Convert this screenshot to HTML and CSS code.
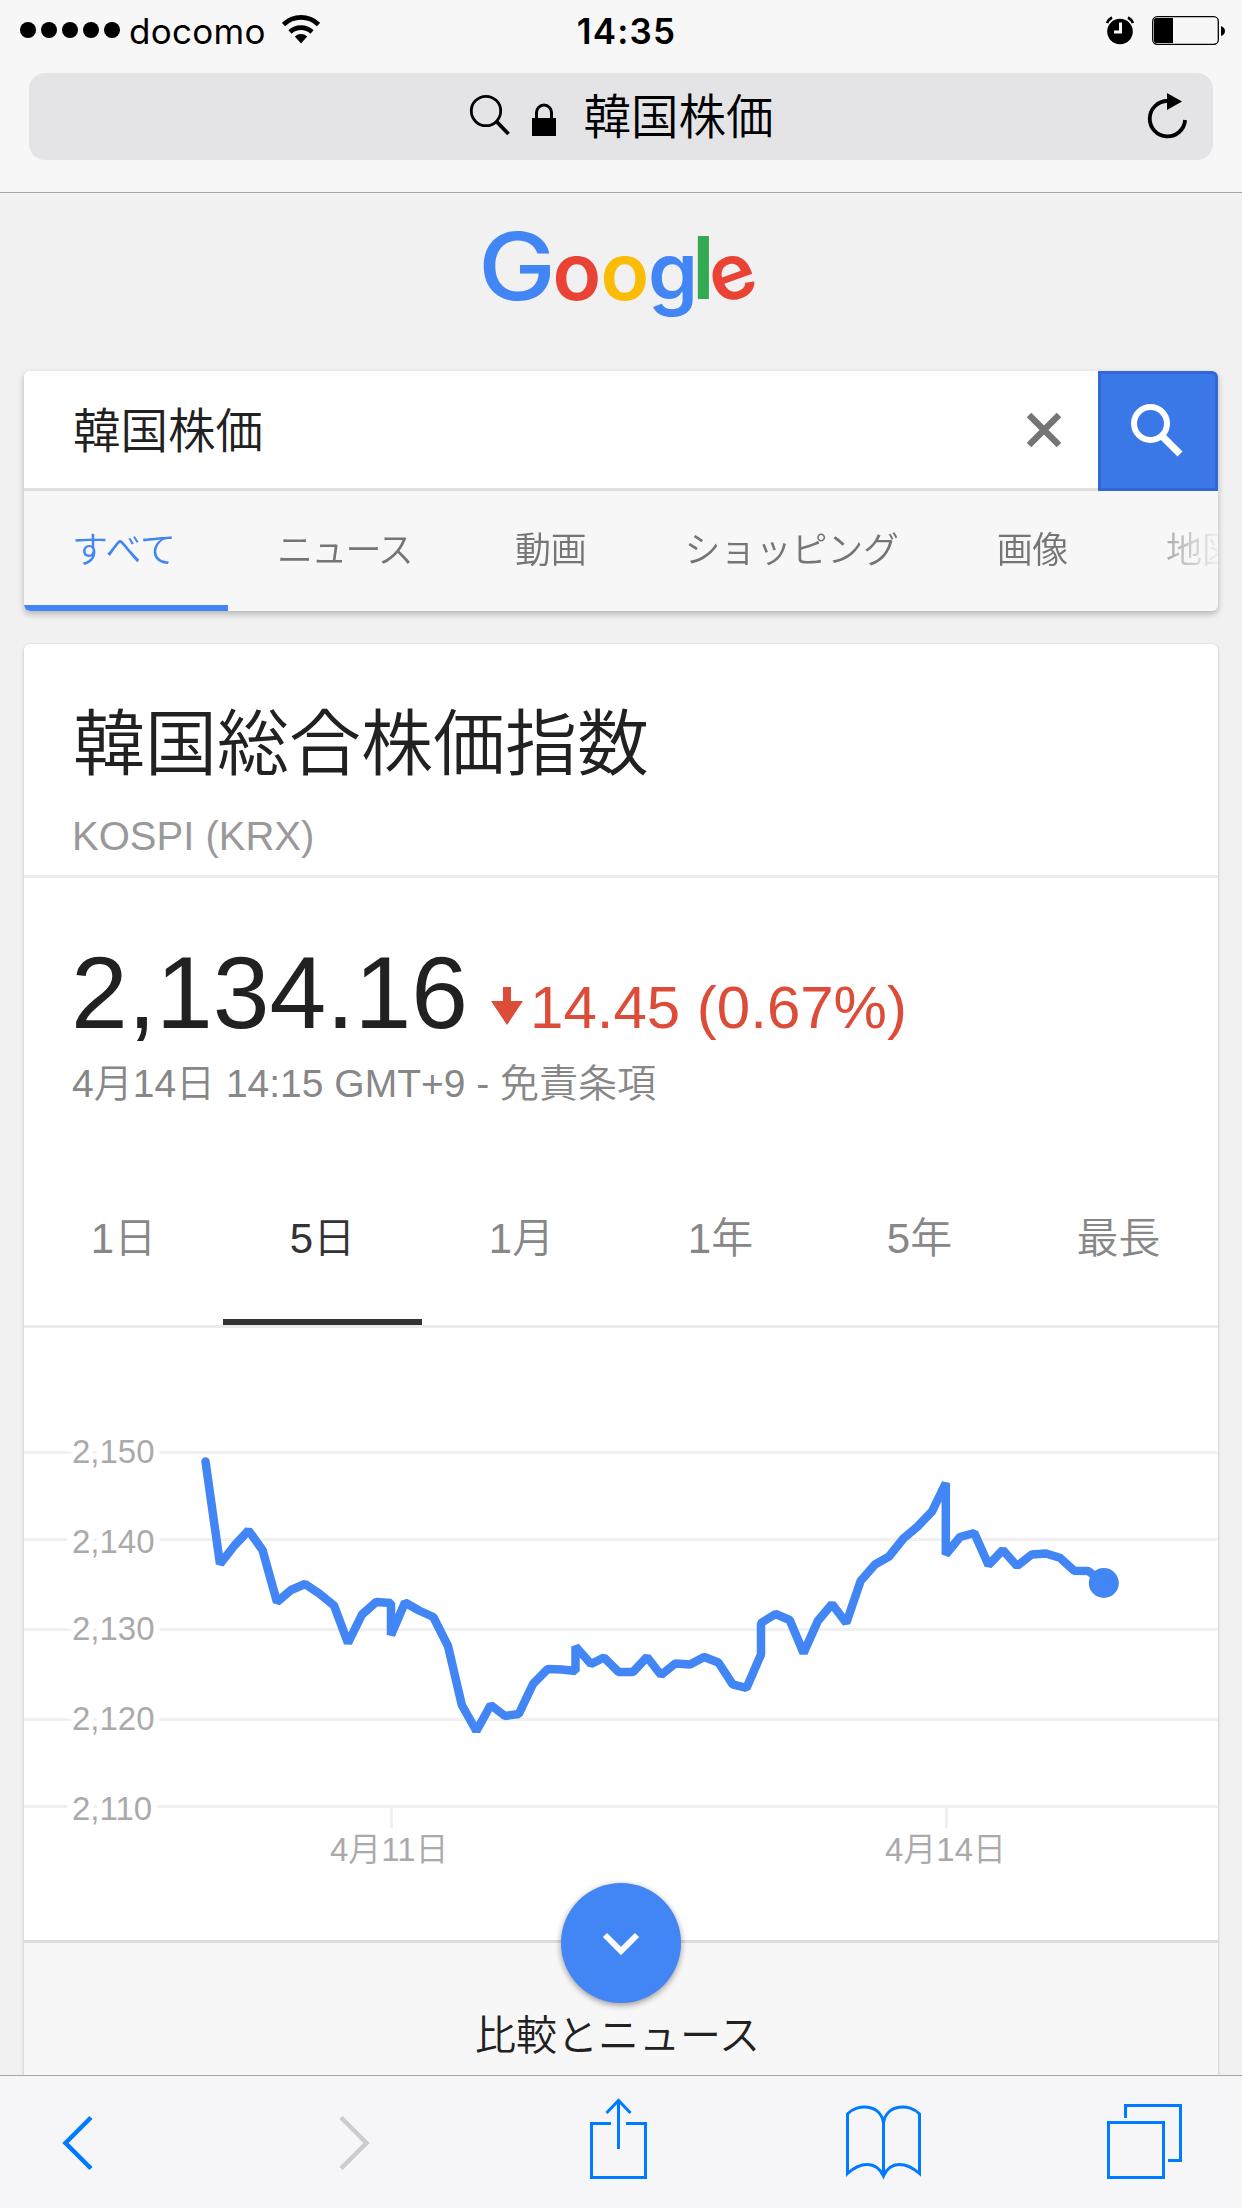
FILE: index.html
```html
<!DOCTYPE html>
<html lang="ja">
<head>
    <meta charset="UTF-8">
    <meta name="viewport" content="width=device-width, initial-scale=1.0">
    <title>韓国株価 - Google 検索</title>
    <link rel="stylesheet" href="styles.css">
</head>
<body>
    <header class="browser">
        <div class="status">
            <div class="carrier">
                <div class="signal"><i></i><i></i><i></i><i></i><i></i></div>
                <span class="carrier-name">docomo</span>
                <svg class="wifi" width="38" height="30" viewBox="0 0 38 30">
                    <path d="M1.5 9.5a25 25 0 0 1 35 0M8 17a16 16 0 0 1 22 0" fill="none" stroke="#000" stroke-width="4.6"/>
                    <path d="M12.8 21.6a9 9 0 0 1 12.4 0L19 28.5z"/>
                </svg>
            </div>
            <span class="clock">14:35</span>
            <div class="power">
                <svg width="30" height="30" viewBox="0 0 30 30">
                    <circle cx="15" cy="15.500" r="12.800"/>
                    <path d="M2 7a11 11 0 0 1 5-5.500M28 7a11 11 0 0 0-5-5.500" fill="none" stroke="#000" stroke-width="2.600"/>
                    <path d="M15.500 6.500v9.500h-6.500" fill="none" stroke="#f7f7f7" stroke-width="3"/>
                </svg>
                <svg width="74" height="30" viewBox="0 0 74 30">
                    <rect x=".7" y=".7" width="65.600" height="27.600" rx="4.500" fill="none" stroke="#000" stroke-width="1.300"/>
                    <path d="M4 2h17v25H4q-2 0-2-2V4q0-2 2-2z"/>
                    <path d="M69 10q4 1.500 4 5t-4 5z"/>
                </svg>
            </div>
        </div>
        <div class="address">
            <span></span>
            <div class="address-text">
                <svg width="90" height="48" viewBox="466 91 90 48">
                    <circle cx="486" cy="109" r="14.700" fill="none" stroke="#000" stroke-width="2.800"/>
                    <path d="M497 120l11.500 12" stroke="#000" stroke-width="3.800"/>
                    <path d="M532 116h24v18h-24z"/>
                    <path d="M536.500 117v-6.500a7.500 7.500 0 0 1 15 0v6.500" fill="none" stroke="#000" stroke-width="3"/>
                </svg>
                <span>韓国株価</span>
            </div>
            <svg class="reload" width="46" height="50" viewBox="1145 92 46 50">
                <path d="M1167.500 101a17.700 17.700 0 1 0 17.600 19" fill="none" stroke="#000" stroke-width="3.800"/>
                <path d="M1167 93l15 8.500-15 8.500z"/>
            </svg>
        </div>
    </header>

    <main>
        <svg class="logo" width="290" height="100" viewBox="476 226 290 100">
            <text class="blue big" x="478" y="299.500" textLength="78" lengthAdjust="spacingAndGlyphs">G</text>
            <text class="red" x="552.500" y="299.500">o</text>
            <text class="yellow" x="600.500" y="299.500">o</text>
            <text class="blue" x="648" y="299.500">g</text>
            <text class="green tall" x="692" y="299">l</text>
            <text class="red small" x="709.500" y="299.500" transform="rotate(-20 731.500 278)">e</text>
        </svg>

        <section class="search">
            <div class="search-row">
                <span class="query">韓国株価</span>
                <svg class="clear" width="34" height="34" viewBox="0 0 34 34">
                    <path d="M2 2l30 30M32 2L2 32" stroke="#757575" stroke-width="6.500"/>
                </svg>
                <button class="search-button">
                    <svg width="60" height="60" viewBox="1128 401 60 60">
                        <circle cx="1150.500" cy="423.500" r="16.500" fill="none" stroke="#fff" stroke-width="6"/>
                        <path d="M1162.500 436.500l17.500 17.500" stroke="#fff" stroke-width="7"/>
                    </svg>
                </button>
            </div>
            <nav class="tabs">
                <a class="active">すべて</a>
                <a class="news">ニュース</a>
                <a>動画</a>
                <a>ショッピング</a>
                <a>画像</a>
                <a>地図</a>
            </nav>
        </section>

        <section class="card">
            <div class="title">
                <h1>韓国総合株価指数</h1>
                <p>KOSPI (KRX)</p>
            </div>
            <div class="quote">
                <div class="price">
                    <strong>2,134.16</strong>
                    <svg width="32" height="38" viewBox="0 0 32 38">
                        <path d="M12 0h8v14h12L16 38 0 14h12z" fill="#dd4b39"/>
                    </svg>
                    <span class="change">14.45 (0.67%)</span>
                </div>
                <p>4月14日 14:15 GMT+9 - 免責条項</p>
            </div>
            <nav class="ranges">
                <a>1日</a>
                <a class="active">5日</a>
                <a>1月</a>
                <a>1年</a>
                <a>5年</a>
                <a>最長</a>
            </nav>
            <svg class="chart" width="1194" height="612" viewBox="24 1328 1194 612">
                <path class="grid" d="M24 1452.500h1194M24 1539.500h1194M24 1629.500h1194M24 1719.500h1194M24 1806.500h1194M391.500 1808v20M946.500 1808v20"/>
                <g class="label">
                    <text x="72" y="1463">2,150</text>
                    <text x="72" y="1553">2,140</text>
                    <text x="72" y="1640">2,130</text>
                    <text x="72" y="1730">2,120</text>
                    <text x="72" y="1820">2,110</text>
                    <text x="330" y="1861">4月11日</text>
                    <text x="885" y="1861">4月14日</text>
                </g>
                <polyline class="line" points="205.500,1461.500 220,1564 234.500,1545.500 248.500,1530.500 262.500,1550 277,1602 291,1590 305,1584 319.200,1593.500 334,1605.500 348,1643 362,1614.500 376.200,1602 391,1603 391,1635 405,1602.500 419,1610.500 433.300,1617 448,1646 461.800,1705 476.400,1731 490.700,1705 505,1716 518.800,1714 533,1684 547.700,1669 561.600,1669.500 575.500,1671 575.500,1646.500 591,1664 604,1657.500 618.600,1672 633,1672 647,1657 661,1675 675.300,1663.500 690,1664.500 704.200,1657 718.400,1662.500 732.700,1684.300 746.500,1688 761,1654.500 761,1623 775.500,1614 789.700,1620 803.600,1653 817.800,1621 832,1604 846.300,1623 860.600,1581 875,1564.500 889,1556.500 903.400,1538.500 917.600,1526.500 932,1511.500 945.800,1483 945.800,1554.500 960,1537 974.300,1533 988.500,1565 1002.800,1550 1017,1566 1031.700,1554.500 1046,1553.500 1059.800,1557.700 1074,1570.700 1088.300,1571 1103.800,1583"/>
                <circle cx="1103.800" cy="1583" r="15" fill="#4285f4"/>
            </svg>
            <div class="more">
                <div class="more-button">
                    <svg width="40" height="26" viewBox="0 0 40 26">
                        <path d="M4 5l16 16L36 5" fill="none" stroke="#fff" stroke-width="6"/>
                    </svg>
                </div>
                <span>比較とニュース</span>
            </div>
        </section>
    </main>

    <footer class="toolbar">
        <svg width="1242" height="132" viewBox="0 2076 1242 132">
            <path class="thick" d="M91 2117.500L65.500 2143l25.500 25.500"/>
            <path class="thick off" d="M341 2117.500l25.500 25.500-25.500 25.500"/>
            <path d="M611 2123.500h-19.500v54h54v-54H626M618.500 2102v47M606.500 2113l12-12.500 12 12.500"/>
            <path d="M883.500 2176v-53C881 2104 857 2103 847.500 2114v59.500C860 2162 876 2160 883.500 2176c7-16 23-14 36-2.500V2114C910 2103 886 2104 883.500 2123"/>
            <path d="M1108.500 2122.500h55v55h-55zM1125.500 2118v-12.500h55v55H1168"/>
        </svg>
    </footer>
</body>
</html>
```

FILE: styles.css
```css
* {
    box-sizing: border-box;
}

body {
    margin: 0;
    width: 1242px;
    height: 2208px;
    overflow: hidden;
    display: flex;
    flex-direction: column;
    background: #f1f1f1;
    color: #212121;
    font-family: "Liberation Sans", "Noto Sans CJK JP", sans-serif;
    font-weight: 350;
}

svg {
    display: block;
    flex: none;
}

h1, p {
    margin: 0;
    font-weight: 350;
}

/* ブラウザ上部 */
.browser {
    flex: none;
    height: 193px;
    padding: 0 29px;
    background: #f7f7f7;
    border-bottom: 1px solid #a7a7a7;
    color: #000;
}

.status {
    display: grid;
    grid-template-columns: 1fr auto 1fr;
    height: 73px;
    margin: 0 -13px 0 -9px;
    font-family: Inter, sans-serif;
    font-size: 35px;
    line-height: 62px;
}

.carrier {
    display: flex;
    font-weight: 400;
}

.signal {
    display: flex;
    gap: 5px;
    padding-top: 22px;
}

.signal i {
    width: 16px;
    height: 16px;
    border-radius: 50%;
    background: #000;
}

.carrier-name {
    margin-left: 9px;
    width: 136px;
    letter-spacing: 0.3px;
}

.wifi {
    margin: 15px 0 0 17px;
}

.clock {
    padding-left: 7px;
    font-weight: 600;
    letter-spacing: 1.2px;
}

.power {
    display: flex;
    justify-content: flex-end;
    gap: 17px;
    padding-top: 16px;
}

.address {
    display: grid;
    grid-template-columns: 1fr auto 1fr;
    align-items: center;
    height: 87px;
    border-radius: 16px;
    background: #e4e4e6;
    font-size: 47.5px;
    line-height: 87px;
}

.address-text {
    display: flex;
    align-items: center;
    gap: 28px;
    margin-right: 3px;
}

.address-text span {
    padding-top: 1px;
}

.reload {
    justify-self: end;
    margin-right: 22px;
}

/* 検索 */
main {
    flex: 1;
    min-height: 0;
    padding: 33px 24px 0;
    overflow: hidden;
}

.logo {
    margin: 0 0 45px 452px;
    overflow: visible;
    font-family: Inter, sans-serif;
    font-size: 80px;
    font-weight: 600;
}

.logo .big {
    font-size: 93px;
    font-weight: 500;
}

.logo .tall {
    font-size: 87px;
}

.logo .small {
    font-size: 78px;
}

.blue {
    fill: #4285f4;
}

.red {
    fill: #ea4335;
}

.yellow {
    fill: #fbbc05;
}

.green {
    fill: #34a853;
}

.search {
    height: 240px;
    border-radius: 6px;
    background: #f7f7f7;
    box-shadow: 0 3px 6px rgba(0, 0, 0, 0.25);
}

.search-row {
    display: flex;
    align-items: center;
    height: 120px;
    border-bottom: 3px solid #e0e0e0;
    border-radius: 6px 6px 0 0;
    background: #fff;
}

.query {
    flex: 1;
    padding: 0 0 4px 49px;
    font-size: 47.5px;
}

.clear {
    margin-right: 37px;
}

.search-button {
    display: flex;
    align-items: center;
    justify-content: center;
    align-self: flex-start;
    width: 120px;
    height: 120px;
    padding: 0;
    border: 3px solid #3367d6;
    border-radius: 0 6px 0 0;
    background: #3b78e7;
}

.tabs {
    display: flex;
    height: 120px;
    overflow: hidden;
    border-radius: 0 0 6px 6px;
    color: #757575;
    font-size: 36px;
    line-height: 119px;
    white-space: nowrap;
    -webkit-mask-image: linear-gradient(to right, #000 1100px, transparent 1200px);
    mask-image: linear-gradient(to right, #000 1100px, transparent 1200px);
}

.tabs a {
    flex: none;
    padding: 0 49px;
    letter-spacing: -0.3px;
}

.tabs .active {
    width: 204px;
    padding: 0 0 0 48px;
    border-bottom: 6px solid #4285f4;
    color: #4285f4;
    letter-spacing: 0;
}

.tabs .news {
    padding: 0 54px 0 49px;
    letter-spacing: -1.8px;
}

/* 株価カード */
.card {
    margin-top: 33px;
    border-radius: 6px 6px 0 0;
    background: #fff;
    box-shadow: 0 1px 3px rgba(0, 0, 0, 0.25);
}

.title {
    height: 234px;
    padding: 48px 48px 0;
    border-bottom: 3px solid #ebebeb;
}

.title h1 {
    margin-left: 1px;
    font-size: 72px;
    line-height: 104px;
}

.title p {
    color: #999;
    font-size: 40px;
    line-height: 80px;
}

.quote {
    height: 322px;
    padding: 57px 48px 0;
}

.price {
    display: flex;
    align-items: baseline;
    height: 116px;
    margin-left: -1px;
}

.price strong {
    font-size: 102px;
    font-weight: 400;
    line-height: 116px;
}

.price svg {
    margin: 52px 7px 0 23px;
    align-self: flex-start;
}

.change {
    color: #dd4b39;
    font-size: 60px;
}

.quote p {
    color: #878787;
    font-size: 39px;
    line-height: 66px;
}

.ranges {
    display: flex;
    height: 128px;
    border-bottom: 3px solid #ebebeb;
    color: #878787;
    font-size: 42px;
    line-height: 77px;
    text-align: center;
}

.ranges a {
    flex: 1;
}

.ranges .active {
    border-bottom: 6px solid #333;
    color: #333;
}

.grid {
    fill: none;
    stroke: #f0f0f0;
    stroke-width: 3;
}

.label {
    fill: #aaa;
    stroke: #fff;
    stroke-width: 12;
    paint-order: stroke;
    font-size: 33px;
}

.line {
    fill: none;
    stroke: #4285f4;
    stroke-width: 8.5;
    stroke-linecap: round;
    stroke-linejoin: bevel;
}

.more {
    display: flex;
    flex-direction: column;
    align-items: center;
    height: 150px;
    border-top: 3px solid #dcdcdc;
    background: #f7f7f7;
    font-size: 41px;
}

.more-button {
    display: flex;
    flex: none;
    align-items: center;
    justify-content: center;
    width: 120px;
    height: 120px;
    margin-top: -60px;
    border-radius: 50%;
    background: #4285f4;
    box-shadow: 0 2px 6px rgba(0, 0, 0, 0.4);
}

.more span {
    padding-right: 7px;
    line-height: 67px;
}

/* ブラウザ下部 */
.toolbar {
    flex: none;
    height: 133px;
    border-top: 1px solid #a8a8a8;
    background: #f6f6f8;
}

.toolbar path {
    fill: none;
    stroke: #007aff;
    stroke-width: 3;
}

.toolbar .thick {
    stroke-width: 4.5;
}

.toolbar .off {
    stroke: #ccc;
}
```
